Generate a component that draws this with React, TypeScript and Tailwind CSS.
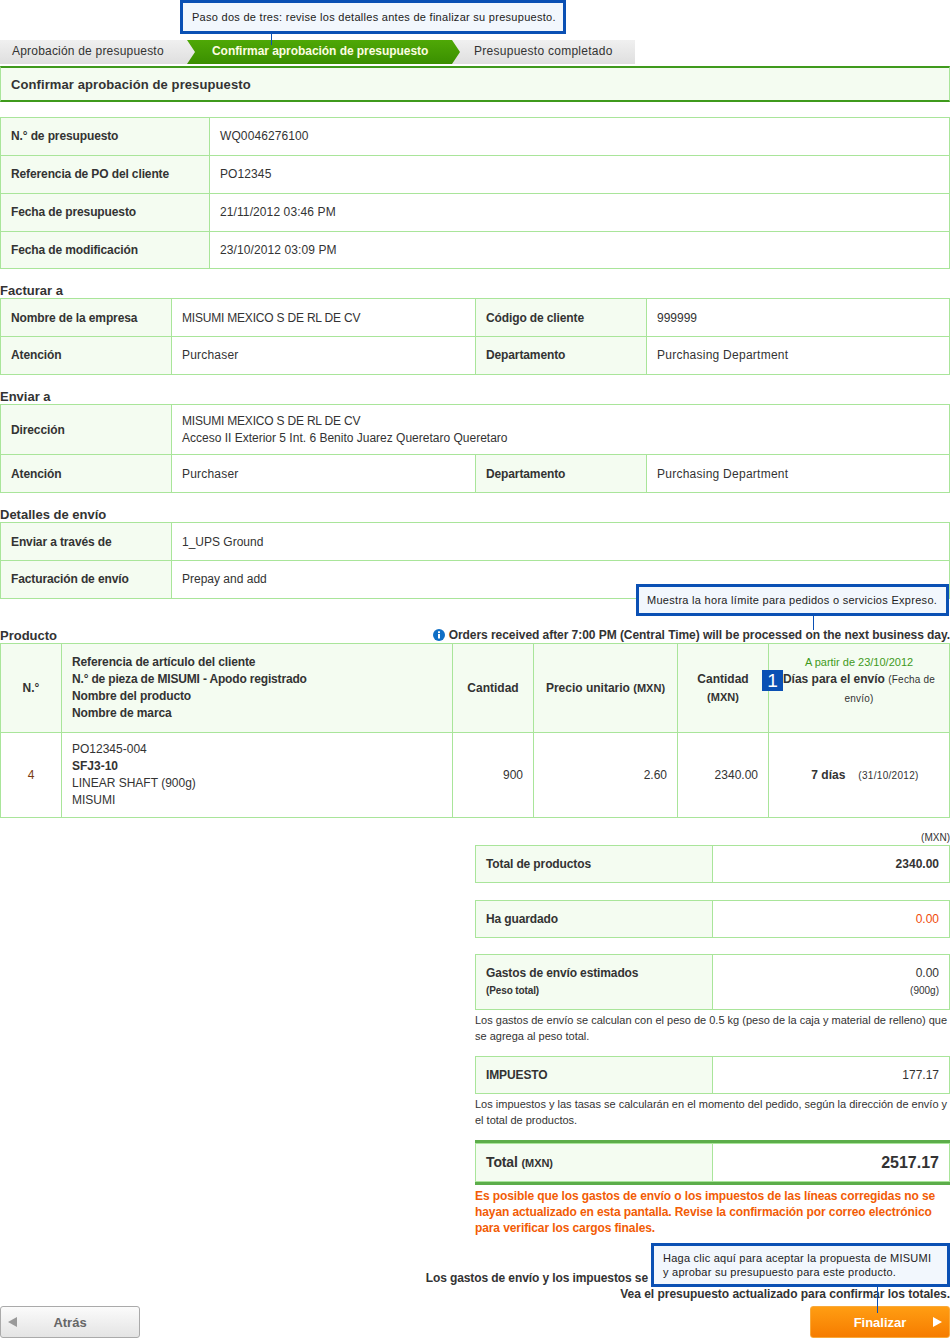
import React from "react";

const cellBorder = "border border-[#a9e59a]";
const thBase = `${cellBorder} bg-[#f4fcf1] font-bold align-middle`;
const th = `${thBase} px-[10px] text-left tracking-[-0.12px]`;
const td = `${cellBorder} px-[10px] align-middle`;
// these rows sit a pixel lower in the original
const nudge = "pt-[2px]";

const SectionTitle = ({ children }: { children: React.ReactNode }) => (
  <div className="mt-[13px] pt-px font-bold text-[13px] leading-[15px] text-[#333]">{children}</div>
);

const Callout = ({ className, children }: { className: string; children: React.ReactNode }) => (
  <div className={`absolute z-10 border-[3px] border-[#0a50b4] bg-[#f2f7fd] text-[11px] text-[#222] ${className}`}>
    {children}
  </div>
);

const Stem = ({ className }: { className: string }) => <div className={`absolute z-10 w-px bg-[#0a50b4] ${className}`} />;

const SummaryRow = ({ label, value, className }: { label: React.ReactNode; value: React.ReactNode; className: string }) => (
  <table className={`w-[475px] table-fixed border-collapse ${className}`}>
    <tbody>
      <tr>
        <th className={`${th} w-[237px]`}>{label}</th>
        <td className={`${td} text-right`}>{value}</td>
      </tr>
    </tbody>
  </table>
);

export default function App() {
  return (
    <div className="relative h-[1340px] w-[950px] overflow-hidden bg-white font-['Liberation_Sans',Arial,sans-serif] text-[12px] leading-[17px] text-[#333]">
      <Callout className="left-[180px] top-0 flex h-[34px] w-[386px] items-center pl-[9px] tracking-[0.28px]">
        Paso dos de tres: revise los detalles antes de finalizar su presupuesto.
      </Callout>
      <Stem className="left-[271px] top-[34px] h-[11px]" />

      {/* steps */}
      <div className="pt-[40px]">
        <div className="relative flex h-[24px] w-[635px] items-center bg-gradient-to-b from-[#f0f0f0] to-[#dfdfdf]">
          <span className="absolute left-[12px] top-[3px] tracking-[0.2px]">Aprobación de presupuesto</span>
          <svg className="absolute left-[150px] top-0" width="320" height="24" viewBox="0 0 320 24">
            <defs>
              <linearGradient id="stepGreen" x1="0" y1="0" x2="0" y2="1">
                <stop offset="0" stopColor="#4fa806" />
                <stop offset="1" stopColor="#3a8f00" />
              </linearGradient>
            </defs>
            <path d="M37 0H302L310 12L302 24H37L45 12Z" fill="url(#stepGreen)" />
          </svg>
          <span className="absolute left-[212px] top-[3px] font-bold tracking-[-0.05px] text-[#fdfde0]">Confirmar aprobación de presupuesto</span>
          <span className="absolute left-[474px] top-[3px] tracking-[0.27px]">Presupuesto completado</span>
        </div>
      </div>

      <div className="mt-[2px] flex h-[36px] items-center border-x border-x-[#a9e59a] border-y-2 border-y-[#3f9a1c] bg-[#f4fcf1] pl-[10px] text-[13px] font-bold tracking-[0.1px]">
        Confirmar aprobación de presupuesto
      </div>

      <table className="mt-[15px] w-[950px] table-fixed border-collapse">
        <tbody>
          {[
            ["N.° de presupuesto", "WQ0046276100", "h-[38px]"],
            ["Referencia de PO del cliente", "PO12345", "h-[38px]"],
            ["Fecha de presupuesto", "21/11/2012 03:46 PM", "h-[38px]"],
            ["Fecha de modificación", "23/10/2012 03:09 PM", "h-[37px]"],
          ].map(([k, v, h]) => (
            <tr key={k} className={h}>
              <th className={`${th} w-[209px]`}>{k}</th>
              <td className={`${td} tracking-[0.1px]`}>{v}</td>
            </tr>
          ))}
        </tbody>
      </table>

      <SectionTitle>Facturar a</SectionTitle>
      <table className="w-[950px] table-fixed border-collapse">
        <colgroup>
          <col className="w-[171px]" />
          <col className="w-[304px]" />
          <col className="w-[171px]" />
          <col />
        </colgroup>
        <tbody>
          <tr className="h-[38px]">
            <th className={`${th} ${nudge}`}>Nombre de la empresa</th>
            <td className={`${td} ${nudge} tracking-[-0.2px]`}>MISUMI MEXICO S DE RL DE CV</td>
            <th className={`${th} ${nudge}`}>Código de cliente</th>
            <td className={`${td} ${nudge}`}>999999</td>
          </tr>
          <tr className="h-[38px]">
            <th className={th}>Atención</th>
            <td className={`${td} tracking-[0.2px]`}>Purchaser</td>
            <th className={th}>Departamento</th>
            <td className={`${td} tracking-[0.25px]`}>Purchasing Department</td>
          </tr>
        </tbody>
      </table>

      <SectionTitle>Enviar a</SectionTitle>
      <table className="w-[950px] table-fixed border-collapse">
        <colgroup>
          <col className="w-[171px]" />
          <col className="w-[304px]" />
          <col className="w-[171px]" />
          <col />
        </colgroup>
        <tbody>
          <tr className="h-[50px]">
            <th className={`${th} ${nudge}`}>Dirección</th>
            <td className={td} colSpan={3}>
              <span className="tracking-[-0.2px]">MISUMI MEXICO S DE RL DE CV</span>
              <br />
              Acceso II Exterior 5 Int. 6 Benito Juarez Queretaro Queretaro
            </td>
          </tr>
          <tr className="h-[38px]">
            <th className={`${th} ${nudge}`}>Atención</th>
            <td className={`${td} ${nudge} tracking-[0.2px]`}>Purchaser</td>
            <th className={`${th} ${nudge}`}>Departamento</th>
            <td className={`${td} ${nudge} tracking-[0.25px]`}>Purchasing Department</td>
          </tr>
        </tbody>
      </table>

      <SectionTitle>Detalles de envío</SectionTitle>
      <table className="w-[950px] table-fixed border-collapse">
        <tbody>
          <tr className="h-[38px]">
            <th className={`${th} ${nudge} w-[171px]`}>Enviar a través de</th>
            <td className={`${td} ${nudge}`}>1_UPS Ground</td>
          </tr>
          <tr className="h-[38px]">
            <th className={th}>Facturación de envío</th>
            <td className={td}>Prepay and add</td>
          </tr>
        </tbody>
      </table>

      <Callout className="left-[636px] top-[584px] flex h-[32px] w-[313px] items-center pl-[8px] tracking-[0.29px]">
        Muestra la hora límite para pedidos o servicios Expreso.
      </Callout>
      <Stem className="left-[813px] top-[616px] h-[14px]" />

      <div className="mt-[28px] flex h-[16px] items-center justify-between">
        <span className="text-[13px] font-bold">Producto</span>
        <span className="flex items-center gap-[4px] text-[12px] font-bold tracking-[-0.05px]">
          <svg width="12" height="12" viewBox="0 0 12 12">
            <circle cx="6" cy="6" r="6" fill="#0f6fc6" />
            <rect x="5" y="5" width="2" height="4.5" fill="#fff" />
            <rect x="5" y="2.3" width="2" height="1.8" fill="#fff" />
          </svg>
          Orders received after 7:00 PM (Central Time) will be processed on the next business day.
        </span>
      </div>

      <table className="w-[950px] table-fixed border-collapse">
        <thead>
          <tr className="h-[89px]">
            <th className={`${thBase} w-[61px] text-center`}>N.°</th>
            <th className={`${th} w-[391px]`}>
              Referencia de artículo del cliente
              <br />
              <span className="tracking-[-0.17px]">N.° de pieza de MISUMI - Apodo registrado</span>
              <br />
              Nombre del producto
              <br />
              Nombre de marca
            </th>
            <th className={`${thBase} w-[81px] text-center`}>Cantidad</th>
            <th className={`${thBase} w-[144px] text-center`}>
              Precio unitario <span className="text-[11px]">(MXN)</span>
            </th>
            <th className={`${thBase} w-[91px] text-center leading-[18px]`}>
              Cantidad
              <br />
              <span className="text-[11px]">(MXN)</span>
            </th>
            <th className={`${thBase} relative px-[8px] pb-[15px] text-center`}>
              <div className="font-normal text-[11px] leading-[16px] text-[#3f9a1c]">A partir de 23/10/2012</div>
              <div className="leading-[18px]">
                Días para el envío <span className="font-normal text-[10px] tracking-[0.2px]">(Fecha de envío)</span>
              </div>
              <span className="absolute left-[-7px] top-[26px] flex h-[21px] w-[21px] items-center justify-center bg-[#0a50b4] text-[19px] font-normal text-white">
                1
              </span>
            </th>
          </tr>
        </thead>
        <tbody>
          <tr className="h-[85px]">
            <td className={`${cellBorder} align-middle text-center text-[#7a3b10]`}>4</td>
            <td className={td}>
              PO12345-004
              <br />
              <b>SFJ3-10</b>
              <br />
              LINEAR SHAFT (900g)
              <br />
              MISUMI
            </td>
            <td className={`${td} text-right`}>900</td>
            <td className={`${td} text-right`}>2.60</td>
            <td className={`${td} text-right`}>2340.00</td>
            <td className={`${cellBorder} pl-[12px] align-middle text-center`}>
              <b>7 días</b>
              <span className="ml-[13px] text-[10px] tracking-[0.3px]">(31/10/2012)</span>
            </td>
          </tr>
        </tbody>
      </table>

      <div className="ml-[475px] w-[475px]">
        <div className="mt-[13px] text-right text-[10px] leading-[14px]">(MXN)</div>
        <SummaryRow className="h-[38px]" label="Total de productos" value={<b>2340.00</b>} />
        <SummaryRow className="mt-[17px] h-[38px]" label="Ha guardado" value={<span className="text-[#f04a0a]">0.00</span>} />
        <SummaryRow
          className="mt-[16px] h-[56px]"
          label={
            <>
              Gastos de envío estimados
              <br />
              <span className="text-[10px]">(Peso total)</span>
            </>
          }
          value={
            <>
              0.00
              <br />
              <span className="text-[10px]">(900g)</span>
            </>
          }
        />
        <p className="mt-[2px] text-[11px] leading-[16px]">
          Los gastos de envío se calculan con el peso de 0.5 kg (peso de la caja y material de relleno) que se agrega al peso total.
        </p>
        <SummaryRow className="mt-[12px] h-[38px]" label="IMPUESTO" value="177.17" />
        <p className="mt-[2px] text-[11px] leading-[16px]">
          Los impuestos y las tasas se calcularán en el momento del pedido, según la dirección de envío y el total de productos.
        </p>
        <div className="mt-[12px] border-y-[3px] border-y-[#5cad4a]">
          <table className="h-[39px] w-[475px] table-fixed border-collapse">
            <tbody>
              <tr>
                <th className={`${th} w-[237px] text-[14px]`}>
                  Total <span className="text-[11px]">(MXN)</span>
                </th>
                <td className={`${td} text-right text-[16px] font-bold`}>2517.17</td>
              </tr>
            </tbody>
          </table>
        </div>
        <p className="mt-[3px] font-bold leading-[16px] tracking-[-0.1px] text-[#f25c05]">
          Es posible que los gastos de envío o los impuestos de las líneas corregidas no se hayan actualizado en esta pantalla. Revise la confirmación por correo electrónico para verificar los cargos finales.
        </p>
      </div>

      <Callout className="left-[651px] top-[1243px] h-[44px] w-[299px] pl-[9px] pt-[5px] leading-[14px] tracking-[0.24px]">
        Haga clic aquí para aceptar la propuesta de MISUMI
        <br />y aprobar su presupuesto para este producto.
      </Callout>
      <Stem className="left-[877px] top-[1287px] h-[26px]" />

      <div className="absolute right-0 top-[1270px] text-right font-bold leading-[16px]">
        <div className="mr-[302px] tracking-[-0.1px]">Los gastos de envío y los impuestos se</div>
        <div className="tracking-[-0.03px]">Vea el presupuesto actualizado para confirmar los totales.</div>
      </div>

      <div className="absolute bottom-[2px] left-0 right-0 flex justify-between">
        <button className="relative h-[32px] w-[140px] rounded-[3px] border border-[#aaa] bg-gradient-to-b from-[#fbfbfb] to-[#e4e4e4] text-[13px] font-bold text-[#666]">
          <span className="absolute left-[7px] top-[10px] h-0 w-0 border-y-[5px] border-r-[9px] border-y-transparent border-r-[#999]" />
          Atrás
        </button>
        <button className="relative h-[32px] w-[140px] rounded-[3px] border border-[#f9a93a] bg-gradient-to-b from-[#ff9d12] to-[#f67c00] text-[13px] font-bold text-white">
          <span className="absolute right-[7px] top-[10px] h-0 w-0 border-y-[5px] border-l-[9px] border-y-transparent border-l-white" />
          Finalizar
        </button>
      </div>
    </div>
  );
}
